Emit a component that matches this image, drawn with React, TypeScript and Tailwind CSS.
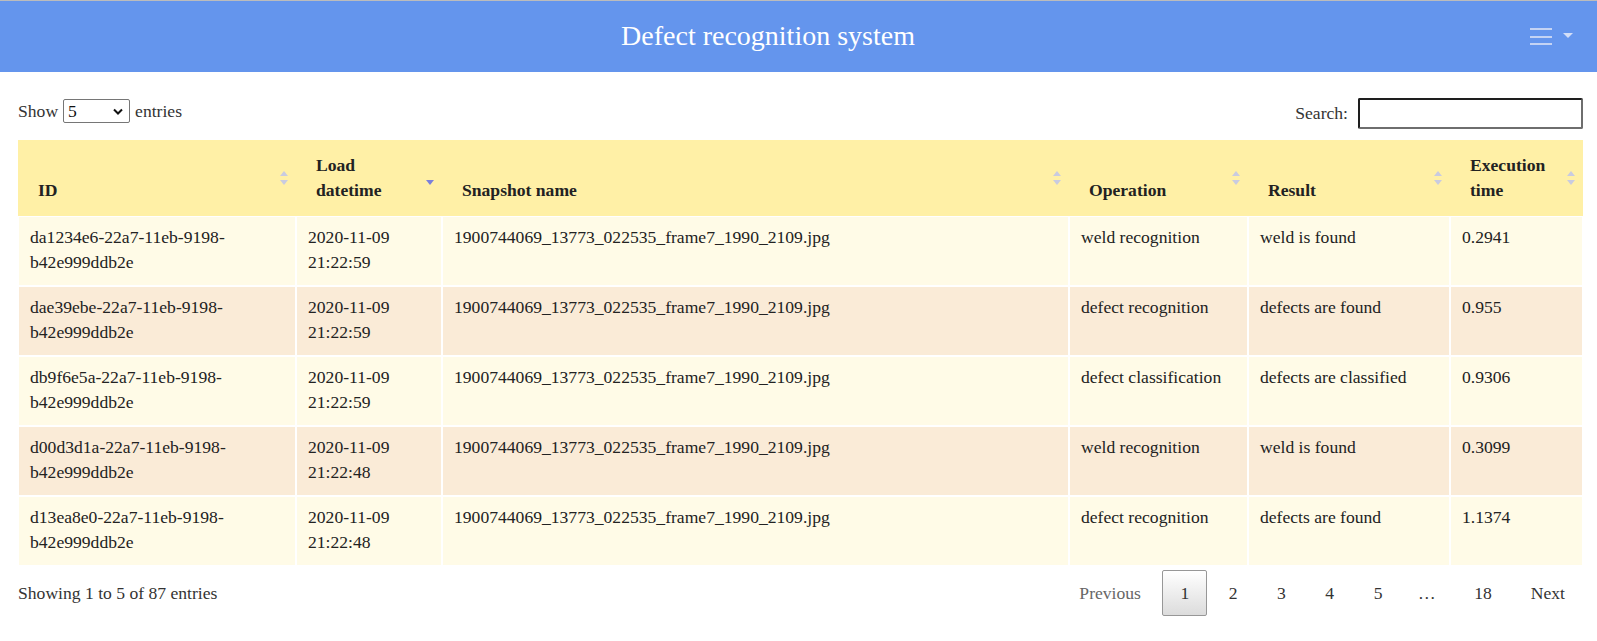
import React from 'react';

const rows = [
  { id: 'da1234e6-22a7-11eb-9198-b42e999ddb2e', date: '2020-11-09 21:22:59', name: '1900744069_13773_022535_frame7_1990_2109.jpg', op: 'weld recognition', result: 'weld is found', time: '0.2941' },
  { id: 'dae39ebe-22a7-11eb-9198-b42e999ddb2e', date: '2020-11-09 21:22:59', name: '1900744069_13773_022535_frame7_1990_2109.jpg', op: 'defect recognition', result: 'defects are found', time: '0.955' },
  { id: 'db9f6e5a-22a7-11eb-9198-b42e999ddb2e', date: '2020-11-09 21:22:59', name: '1900744069_13773_022535_frame7_1990_2109.jpg', op: 'defect classification', result: 'defects are classified', time: '0.9306' },
  { id: 'd00d3d1a-22a7-11eb-9198-b42e999ddb2e', date: '2020-11-09 21:22:48', name: '1900744069_13773_022535_frame7_1990_2109.jpg', op: 'weld recognition', result: 'weld is found', time: '0.3099' },
  { id: 'd13ea8e0-22a7-11eb-9198-b42e999ddb2e', date: '2020-11-09 21:22:48', name: '1900744069_13773_022535_frame7_1990_2109.jpg', op: 'defect recognition', result: 'defects are found', time: '1.1374' },
];

const columns = [
  { label: 'ID', width: 'w-[278px]', sort: 'both' },
  { label: 'Load datetime', width: 'w-[146px]', sort: 'desc' },
  { label: 'Snapshot name', width: 'w-[627px]', sort: 'both' },
  { label: 'Operation', width: 'w-[179px]', sort: 'both' },
  { label: 'Result', width: 'w-[202px]', sort: 'both' },
  { label: 'Execution time', width: 'w-[133px]', sort: 'both' },
];

const SortIcon: React.FC<{ sort: string }> = ({ sort }) => (
  <svg className="absolute right-[8px] top-1/2 -translate-y-1/2" width="8" height="16" viewBox="0 0 8 16">
    {sort === 'both' && <polygon points="0,6 4,1 8,6" fill="#c9cbe0" />}
    <polygon points="0,10 8,10 4,15" fill={sort === 'desc' ? '#7b80da' : '#c9cbe0'} />
  </svg>
);

const App: React.FC = () => {
  return (
    <div className="min-h-screen bg-white [font-family:'Liberation_Serif','Times_New_Roman',serif] text-[17.6px] text-[#333]">
      {/* Top bar */}
      <div className="h-[72px] bg-[#6495ed] border-t border-[#bcbcbc] flex items-center pl-[6px]">
        <div className="flex-1 text-center text-white text-[28px] leading-none pb-[2px]">Defect recognition system</div>
        <div className="flex items-center gap-[11px] pr-[24px]">
          <div className="flex flex-col gap-[5.5px] w-[22px]">
            <span className="block h-[2px] bg-[#c4d3f4]" />
            <span className="block h-[2px] bg-[#c4d3f4]" />
            <span className="block h-[2px] bg-[#c4d3f4]" />
          </div>
          <svg width="10" height="5" viewBox="0 0 10 5" className="mb-[3px]">
            <polygon points="0,0 10,0 5,5" fill="#d3def7" />
          </svg>
        </div>
      </div>

      <div className="pl-[18px] pr-[14px]">
        {/* Toolbar */}
        <div className="mt-[26px] flex justify-between items-start">
          <div className="mt-[1px] h-[24px] flex items-center gap-[5px]">
            <span>Show</span>
            <div className="w-[67px] h-[24px] border border-[#767676] rounded-[2px] flex items-center justify-between pl-[4px] pr-[6px] text-[#111]">
              <span>5</span>
              <svg width="10" height="7" viewBox="0 0 10 7">
                <polyline points="1,1.5 5,5.5 9,1.5" fill="none" stroke="#111" strokeWidth="2" />
              </svg>
            </div>
            <span>entries</span>
          </div>
          <div className="h-[31px] flex items-center gap-[10px]">
            <span>Search:</span>
            <input
              className="w-[225px] h-[31px] border-2 border-t-[#1e1e1e] border-l-[#1e1e1e] border-r-[#6e6e6e] border-b-[#6e6e6e] rounded-[2px] bg-white outline-none"
              type="text"
            />
          </div>
        </div>

        {/* Table */}
        <table className="mt-[11px] w-[1565px] table-fixed border-separate border-spacing-0">
          <thead>
            <tr>
              {columns.map((c) => (
                <th
                  key={c.label}
                  className={`${c.width} relative bg-[#fff0a6] text-left align-bottom font-bold text-[#222] pl-[20px] pr-[26px] pt-[13px] pb-[13px] leading-[25px]`}
                >
                  {c.label}
                  <SortIcon sort={c.sort} />
                </th>
              ))}
            </tr>
          </thead>
          <tbody>
            {rows.map((r, i) => (
              <tr key={r.id} className={i % 2 === 0 ? 'bg-[#fffbe7]' : 'bg-[#faebd7]'}>
                {[r.id, r.date, r.name, r.op, r.result, r.time].map((v, j) => (
                  <td key={j} className="border border-white px-[11px] pt-[8px] pb-[10px] leading-[25px] align-top text-[#222]">
                    {v}
                  </td>
                ))}
              </tr>
            ))}
          </tbody>
        </table>

        {/* Footer */}
        <div className="mt-[4px] flex justify-between items-center">
          <div>Showing 1 to 5 of 87 entries</div>
          <div className="flex items-center">
            <span className="h-[46px] px-[17px] border border-transparent flex items-center text-[#666]">Previous</span>
            <span className="ml-[3.5px] h-[46px] px-[17px] border border-[#979797] rounded-[2px] bg-gradient-to-b from-white to-[#dcdcdc] flex items-center text-[#333]">1</span>
            {['2', '3', '4', '5'].map((p) => (
              <span key={p} className="ml-[3.5px] h-[46px] px-[17px] border border-transparent flex items-center text-[#333]">{p}</span>
            ))}
            <span className="h-[46px] px-[17.6px] flex items-center text-[#333]">…</span>
            <span className="ml-[3px] h-[46px] px-[17px] border border-transparent flex items-center text-[#333]">18</span>
            <span className="ml-[3px] h-[46px] px-[17px] border border-transparent flex items-center text-[#333]">Next</span>
          </div>
        </div>
      </div>
    </div>
  );
};

export default App;
